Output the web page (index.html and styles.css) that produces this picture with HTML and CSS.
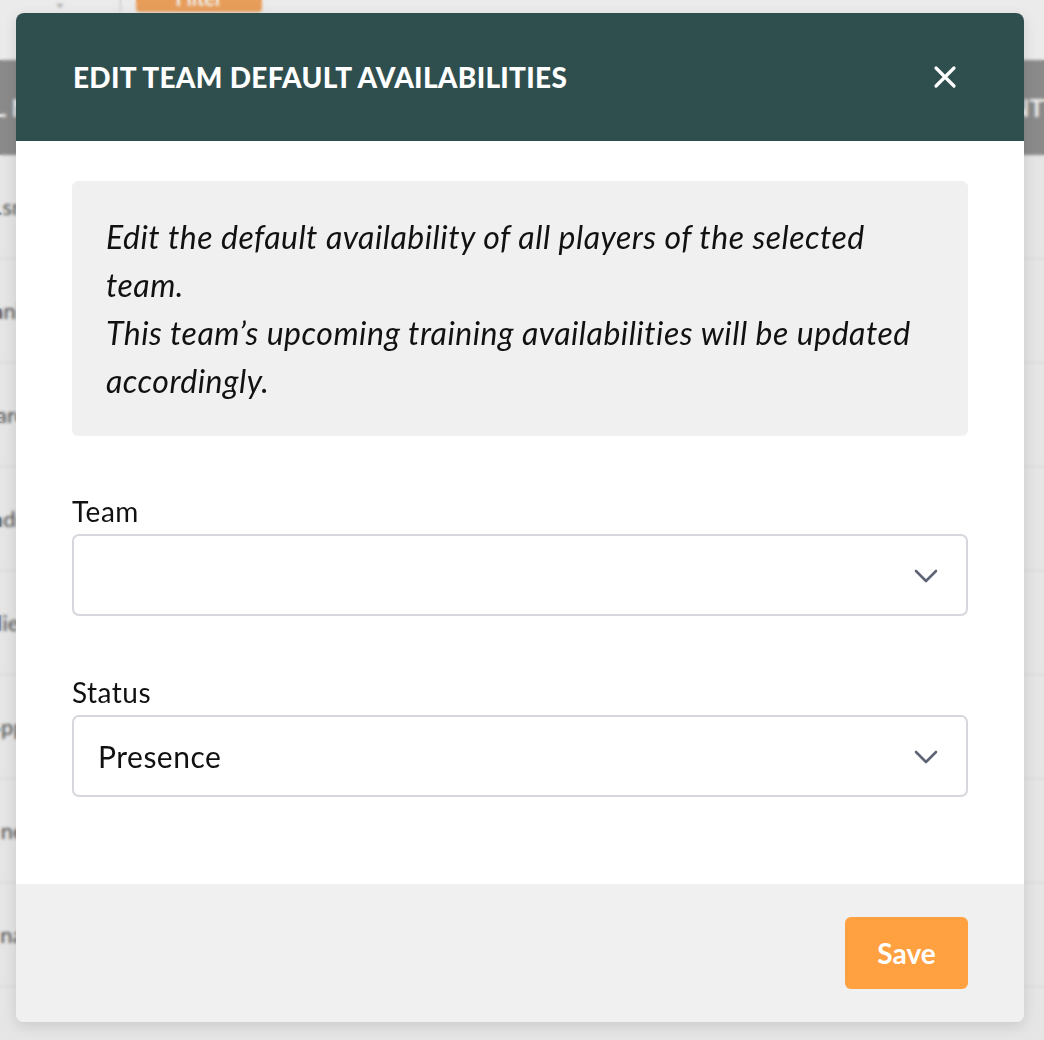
FILE: index.html
```html
<!DOCTYPE html>
<html>
<head>
    <title>Edit team default availabilities</title>
    <link rel="stylesheet" href="styles.css">
</head>
<body>
    <div class="page">
        <div class="toolbar">
            <div class="toolbar-select">&#8964;</div>
            <div class="toolbar-sep"></div>
            <button class="filter-btn">Filter</button>
        </div>
        <table class="players">
            <thead>
                <tr><th>Full name</th><th class="mid">Team</th><th>Count</th></tr>
            </thead>
            <tbody>
                <tr><td>Jo.smith</td><td class="mid"></td><td>12</td></tr>
                <tr><td>Daniel</td><td class="mid"></td><td>4</td></tr>
                <tr><td>Marc</td><td class="mid"></td><td>7</td></tr>
                <tr><td>Andre</td><td class="mid"></td><td>9</td></tr>
                <tr><td>Julie</td><td class="mid"></td><td>3</td></tr>
                <tr><td>Poppy</td><td class="mid"></td><td>5</td></tr>
                <tr><td>Renee</td><td class="mid"></td><td>8</td></tr>
                <tr><td>Yuna</td><td class="mid"></td><td>2</td></tr>
            </tbody>
        </table>
    </div>

    <div class="backdrop"></div>

    <div class="modal">
        <div class="modal-header">
            <h2>Edit team default availabilities</h2>
            <button class="close-btn" aria-label="Close">
                <svg width="24" height="24" viewBox="0 0 24 24"><path d="M3 3 L21 21 M21 3 L3 21" stroke="#fff" stroke-width="3.2" stroke-linecap="round"/></svg>
            </button>
        </div>
        <div class="modal-body">
            <div class="info">
                Edit the default availability of all players of the selected team.<br>
                This team’s upcoming training availabilities will be updated accordingly.
            </div>
            <div class="field">
                <label>Team</label>
                <div class="select">
                    <span></span>
                    <svg class="chevron" width="24" height="16" viewBox="0 0 24 16"><path d="M2 3 L12 13 L22 3" fill="none" stroke="#5e6475" stroke-width="2.6" stroke-linecap="round" stroke-linejoin="round"/></svg>
                </div>
            </div>
            <div class="field">
                <label>Status</label>
                <div class="select">
                    <span>Presence</span>
                    <svg class="chevron" width="24" height="16" viewBox="0 0 24 16"><path d="M2 3 L12 13 L22 3" fill="none" stroke="#5e6475" stroke-width="2.6" stroke-linecap="round" stroke-linejoin="round"/></svg>
                </div>
            </div>
        </div>
        <div class="modal-footer">
            <button class="save-btn">Save</button>
        </div>
    </div>
</body>
</html>
```

FILE: styles.css
```css
body { margin: 0; font-family: Lato, "Open Sans", sans-serif; background: #f4f4f4; width: 1044px; height: 1040px; overflow: hidden; }

.toolbar { height: 60px; display: flex; align-items: flex-start; background: #fafafa; }
.toolbar-select { width: 120px; height: 12px; text-align: center; color: #888; font-size: 14px; line-height: 4px; }
.toolbar-sep { width: 1px; height: 24px; background: #ccc; margin-top: -12px; }
.filter-btn { margin-left: 15px; width: 126px; height: 40px; margin-top: -28px; border: none; border-radius: 4px; background: #f6a760; color: #fff; font-family: Lato, sans-serif; font-weight: 700; font-size: 20px; padding-top: 12px; }

.players { width: 100%; border-collapse: collapse; }
.players th { height: 95px; background: #939393; color: #fff; font-weight: 700; font-size: 24px; text-transform: uppercase; text-align: left; padding: 0; white-space: nowrap; }
.players th:first-child { text-indent: -50px; }
.players th:last-child { padding-left: 2px; }
.players td { height: 103px; border-bottom: 1px solid #e0e0e0; color: #555; font-size: 22px; padding: 0; white-space: nowrap; }
.players td:first-child { text-indent: -24px; }
.players td:last-child { padding-left: 18px; width: 10px; }
.players .mid { width: 1000px; }

.backdrop { position: fixed; inset: 0; background: rgba(0, 0, 0, 0.06); backdrop-filter: blur(1.5px); }

.modal { position: fixed; left: 16px; top: 13px; width: 1008px; height: 1009px; display: flex; flex-direction: column; background: #fff; border-radius: 8px; overflow: hidden; box-shadow: 0 4px 14px rgba(0, 0, 0, 0.12); }

.modal-header { height: 128px; flex-shrink: 0; background: #2f4f4f; display: flex; align-items: center; justify-content: space-between; padding: 0 67px 0 57px; }
.modal-header h2 { margin: 0; color: #fff; font-size: 28px; font-weight: 900; text-transform: uppercase; letter-spacing: 0.3px; }
.close-btn { border: none; background: none; padding: 0; display: flex; }

.modal-body { flex: 1; padding: 40px 56px 0; }
.info { background: #f0f0f0; border-radius: 6px; padding: 32px 40px 31px 34px; font-style: italic; font-size: 32px; letter-spacing: 0.5px; line-height: 48px; color: #111; }

.field { margin-top: 55px; }
.field + .field { margin-top: 56px; }
.field label { display: block; font-size: 28px; letter-spacing: 0.5px; line-height: 40px; color: #111; margin-bottom: 3px; }
.select { height: 78px; border: 2px solid #d6d7dd; border-radius: 7px; display: flex; align-items: center; justify-content: space-between; padding: 0 28px 0 24px; font-size: 30px; letter-spacing: 0.5px; color: #111; }
.chevron { margin-top: 2px; }

.modal-footer { height: 138px; flex-shrink: 0; background: #f0f0f0; display: flex; align-items: center; justify-content: flex-end; padding: 0 56px; }
.save-btn { width: 123px; height: 72px; border: none; border-radius: 6px; background: #ffa141; color: #fff; font-family: Lato, sans-serif; font-weight: 700; font-size: 28px; }
```
